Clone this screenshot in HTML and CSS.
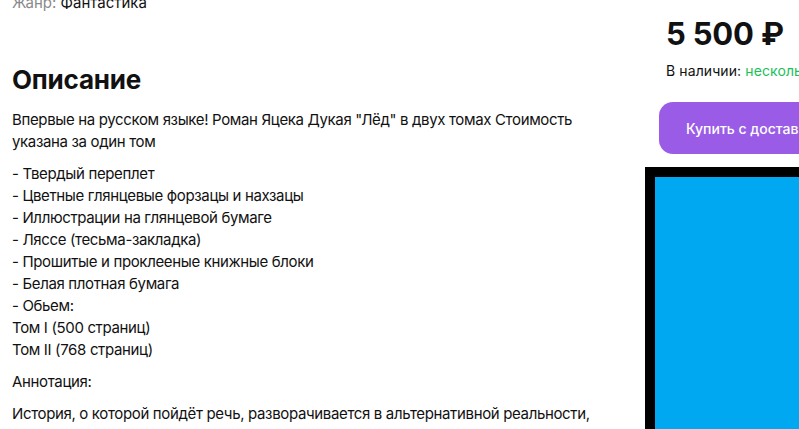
FILE: index.html
```html
<!DOCTYPE html>
<html lang="ru">
<head>
<meta charset="utf-8">
<link rel="stylesheet" href="styles.css">
</head>
<body>
<div class="page">
  <main class="content">
    <div class="genre"><span class="label">Жанр:</span> Фантастика</div>
    <h2 class="title">Описание</h2>
    <p>Впервые на русском языке! Роман Яцека Дукая "Лёд" в двух томах Стоимость указана за один том</p>
    <p>- Твердый переплет<br>- Цветные глянцевые форзацы и нахзацы<br>- Иллюстрации на глянцевой бумаге<br>- Ляссе (тесьма-закладка)<br>- Прошитые и проклееные книжные блоки<br>- Белая плотная бумага<br>- Обьем:<br>Том I (500 страниц)<br>Том II (768 страниц)</p>
    <p>Аннотация:</p>
    <p>История, о которой пойдёт речь, разворачивается в альтернативной реальности, где история XX века пошла по совершенно иному пути.</p>
  </main>
  <aside class="side">
    <div class="buy">
      <div class="price">5 500 ₽</div>
      <div class="stock">В наличии: <span class="green">несколько штук</span></div>
      <button class="btn">Купить с доставкой</button>
    </div>
    <div class="banner"><div class="banner-inner"></div></div>
  </aside>
</div>
</body>
</html>
```
FILE: styles.css
```css
* { box-sizing: border-box; }
html, body { margin: 0; padding: 0; background: #fff; overflow: hidden; }
body {
  font-family: Inter, "Noto Sans", sans-serif;
  color: #111;
  width: 799px;
  height: 429px;
}
.page {
  display: grid;
  grid-template-columns: 633px 1fr;
  margin-top: -8px;
  width: 1000px;
}
.content {
  padding-left: 12px;
  padding-right: 20px;
  font-size: 15px;
  line-height: 22px;
}
.genre { font-size: 15px; line-height: 22px; color: #111; }
.genre .label { color: #8a8a8a; }
.title {
  font-size: 26px;
  font-weight: 700;
  line-height: 34px;
  margin: 49px 0 12px;
  letter-spacing: -0.2px;
}
.content p { margin: 0 0 10px; letter-spacing: -0.35px; }
.side { padding-left: 12px; }
.buy { padding-left: 14px; padding-top: 22px; }
.price {
  font-size: 31px;
  font-weight: 700;
  line-height: 40px;
  padding-left: 7px;
  letter-spacing: -0.2px;
}
.stock {
  font-size: 14px;
  line-height: 20px;
  margin-top: 7px;
  padding-left: 7px;
  letter-spacing: 0.1px;
}
.green { color: #19c159; }
.btn {
  display: block;
  margin-top: 21px;
  width: 240px;
  height: 52px;
  border: none;
  border-radius: 14px;
  background: #9a5ce6;
  color: #fff;
  font-family: inherit;
  font-size: 14px;
  font-weight: 500;
  text-align: left;
  padding-left: 27px;
}
.banner {
  margin-top: 13px;
  width: 300px;
  height: 300px;
  background: #000;
  padding: 10px 0 0 10px;
}
.banner-inner { width: 100%; height: 100%; background: #00a8f2; }
```
